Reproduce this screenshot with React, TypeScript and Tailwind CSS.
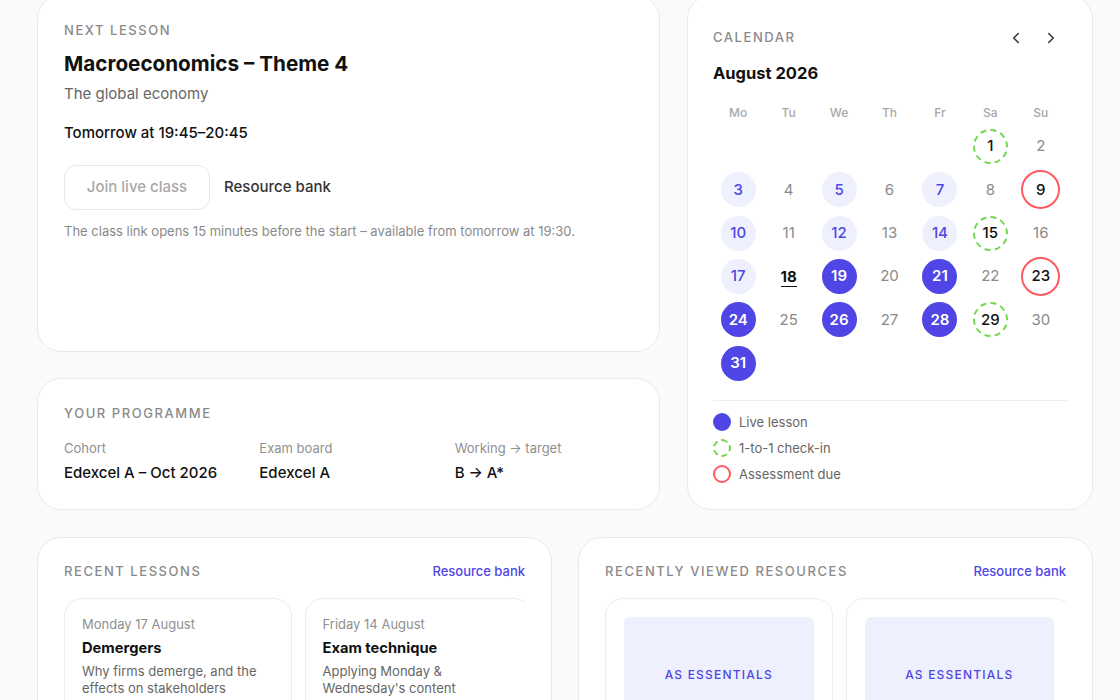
import { ChevronLeft, ChevronRight } from "lucide-react";

type DayKind = "plain" | "soft" | "live" | "checkin" | "due" | "today";

const days: { n: number; kind: DayKind }[] = [
  { n: 1, kind: "checkin" },
  { n: 2, kind: "plain" },
  { n: 3, kind: "soft" },
  { n: 4, kind: "plain" },
  { n: 5, kind: "soft" },
  { n: 6, kind: "plain" },
  { n: 7, kind: "soft" },
  { n: 8, kind: "plain" },
  { n: 9, kind: "due" },
  { n: 10, kind: "soft" },
  { n: 11, kind: "plain" },
  { n: 12, kind: "soft" },
  { n: 13, kind: "plain" },
  { n: 14, kind: "soft" },
  { n: 15, kind: "checkin" },
  { n: 16, kind: "plain" },
  { n: 17, kind: "soft" },
  { n: 18, kind: "today" },
  { n: 19, kind: "live" },
  { n: 20, kind: "plain" },
  { n: 21, kind: "live" },
  { n: 22, kind: "plain" },
  { n: 23, kind: "due" },
  { n: 24, kind: "live" },
  { n: 25, kind: "plain" },
  { n: 26, kind: "live" },
  { n: 27, kind: "plain" },
  { n: 28, kind: "live" },
  { n: 29, kind: "checkin" },
  { n: 30, kind: "plain" },
  { n: 31, kind: "live" },
];

const dayStyles: Record<DayKind, string> = {
  plain: "text-[#8a8a8a]",
  soft: "w-[35px] h-[35px] rounded-full bg-[#eef0fd] text-[#4f46e5] font-medium",
  live: "w-[35px] h-[35px] rounded-full bg-[#4f46e5] text-white font-semibold",
  checkin: "w-[35px] h-[35px] rounded-full border-2 border-dashed border-[#74d64f] text-[#111111] font-medium",
  due: "w-[39px] h-[39px] rounded-full border-2 border-[#ff5a60] text-[#111111] font-medium",
  today: "text-[#111111] font-bold border-b border-[#111111] leading-[19px]",
};

const Label = ({ children }: { children: string }) => (
  <div className="text-[13px] leading-4 font-medium uppercase tracking-[0.12em] text-[#8a8a8a]">{children}</div>
);

const Card = ({ className, children }: { className: string; children: React.ReactNode }) => (
  <section className={`rounded-3xl border border-[#e9e9e9] bg-white ${className}`}>{children}</section>
);

const Fact = ({ label, value }: { label: string; value: string }) => (
  <div>
    <div className="text-[13px] leading-5 text-[#8f8f8f]">{label}</div>
    <div className="mt-[3px] text-[15px] leading-[23px] font-medium text-[#111111]">{value}</div>
  </div>
);

const LessonCard = ({ date, title, text }: { date: string; title: string; text: string }) => (
  <div className="w-[227.5px] h-[180px] shrink-0 rounded-[18px] border border-[#ececec] bg-white px-[17px] pt-[15px]">
    <div className="text-[13px] leading-5 text-[#8f8f8f]">{date}</div>
    <div className="mt-1 text-[14.7px] leading-5 font-bold text-[#111111]">{title}</div>
    <div className="mt-[5px] text-[13px] leading-[17px] text-[#666666] whitespace-pre-line">{text}</div>
  </div>
);

const ResourceCard = () => (
  <div className="w-[227.5px] h-[180px] shrink-0 rounded-[18px] border border-[#ececec] bg-white px-[18px] pt-[18px]">
    <div className="flex h-[116px] items-center justify-center rounded-md bg-[#eef0fd] text-xs font-medium tracking-[0.1em] text-[#4f46e5]">
      AS ESSENTIALS
    </div>
  </div>
);

export default function App() {
  return (
    <div className="h-[700px] overflow-hidden bg-[#fafafa] font-['Inter',sans-serif]">
      <div className="mt-[-5px] pl-[37px] pr-[27px]">
        <div className="flex gap-[27px]">
          <div className="flex w-[623px] flex-col gap-[26px]">
            <Card className="h-[357px] pl-[26px] pr-[25px] pt-[26px]">
              <Label>Next lesson</Label>
              <h1 className="mt-[10px] text-[20.7px] leading-8 font-bold text-[#111111]">Macroeconomics – Theme 4</h1>
              <p className="mt-[2px] text-[15px] leading-6 text-[#666666]">The global economy</p>
              <p className="mt-[15px] text-[15px] leading-6 font-medium text-[#111111]">Tomorrow at 19:45–20:45</p>
              <div className="mt-[20px] flex items-center gap-[14px]">
                <button className="h-[45px] w-[146px] rounded-xl border border-[#e6e6e6] bg-white text-[15px] font-medium text-[#a8a8a8]">
                  Join live class
                </button>
                <a className="text-[15px] font-medium text-[#333333]">Resource bank</a>
              </div>
              <p className="mt-[11px] text-[13px] leading-5 text-[#8a8a8a]">
                The class link opens 15 minutes before the start – available from tomorrow at 19:30.
              </p>
            </Card>
            <Card className="h-[132px] pl-[26px] pr-[25px] pt-[26px]">
              <Label>Your programme</Label>
              <div className="mt-[17px] grid grid-cols-3 gap-[16px]">
                <Fact label="Cohort" value="Edexcel A – Oct 2026" />
                <Fact label="Exam board" value="Edexcel A" />
                <Fact label="Working → target" value="B → A*" />
              </div>
            </Card>
          </div>

          <Card className="w-[406px] h-[515px] px-[25px] pt-[26px]">
            <div className="flex h-[30px] items-center justify-between">
              <Label>Calendar</Label>
              <div className="flex items-center gap-[17px] pr-[7px] pt-[2px]">
                <ChevronLeft size={18} strokeWidth={2} className="text-[#333333]" />
                <ChevronRight size={18} strokeWidth={2} className="text-[#333333]" />
              </div>
            </div>
            <h2 className="mt-[9px] text-[16.5px] leading-6 font-bold text-[#111111]">August 2026</h2>
            <div className="mt-[20px] grid w-[353px] grid-cols-7 text-center text-xs leading-4 font-medium text-[#a8a8a8]">
              {["Mo", "Tu", "We", "Th", "Fr", "Sa", "Su"].map((d) => (
                <div key={d}>{d}</div>
              ))}
            </div>
            <div className="mt-[4px] grid w-[353px] grid-cols-7 auto-rows-[43.3px] text-[15px]">
              {[0, 1, 2, 3, 4].map((i) => (
                <div key={i} />
              ))}
              {days.map((d) => (
                <div key={d.n} className="flex items-center justify-center">
                  <span className={`flex items-center justify-center ${dayStyles[d.kind]}`}>{d.n}</span>
                </div>
              ))}
            </div>
            <div className="mt-[15px] flex flex-col gap-[8px] border-t border-[#eeeeee] pt-[12px] text-[13px] leading-[18px] text-[#666666]">
              <div className="flex items-center gap-[8px]">
                <span className="h-[18px] w-[18px] rounded-full bg-[#4f46e5]" />
                Live lesson
              </div>
              <div className="flex items-center gap-[8px]">
                <span className="h-[18px] w-[18px] rounded-full border-2 border-dashed border-[#74d64f]" />
                1-to-1 check-in
              </div>
              <div className="flex items-center gap-[8px]">
                <span className="h-[18px] w-[18px] rounded-full border-2 border-[#ff5a60]" />
                Assessment due
              </div>
            </div>
          </Card>
        </div>

        <div className="mt-[27px] grid grid-cols-2 gap-[26px]">
          <Card className="h-[300px] px-[26px] pt-[25px]">
            <div className="flex items-center justify-between">
              <Label>Recent lessons</Label>
              <a className="text-[13px] leading-4 font-medium text-[#4f46e5]">Resource bank</a>
            </div>
            <div className="mt-[19px] flex gap-[13px] overflow-hidden">
              <LessonCard date="Monday 17 August" title="Demergers" text={"Why firms demerge, and the\neffects on stakeholders"} />
              <LessonCard date="Friday 14 August" title="Exam technique" text={"Applying Monday &\nWednesday's content"} />
            </div>
          </Card>
          <Card className="h-[300px] px-[26px] pt-[25px]">
            <div className="flex items-center justify-between">
              <Label>Recently viewed resources</Label>
              <a className="text-[13px] leading-4 font-medium text-[#4f46e5]">Resource bank</a>
            </div>
            <div className="mt-[19px] flex gap-[13px] overflow-hidden">
              <ResourceCard />
              <ResourceCard />
            </div>
          </Card>
        </div>
      </div>
    </div>
  );
}
